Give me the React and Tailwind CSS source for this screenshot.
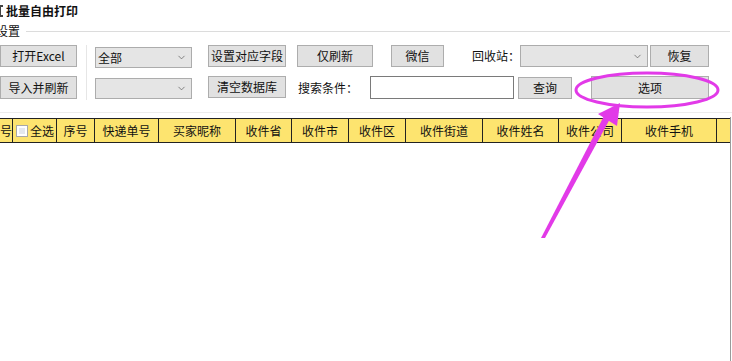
import { ChevronDown } from "lucide-react";

const font = { fontFamily: '"Microsoft YaHei", "Noto Sans CJK SC", "Noto Sans", sans-serif' };

const Btn = ({ className = "", children }) => (
  <button
    className={`h-[22px] bg-[#e1e1e1] border border-[#adadad] text-[12px] text-[#111] leading-none flex items-center justify-center ${className}`}
  >
    {children}
  </button>
);

const Select = ({ className = "", value }) => (
  <div
    className={`h-[21px] bg-[#e5e5e5] border border-[#acacac] flex items-center justify-between pl-[2px] pr-[4px] text-[12px] text-[#111] ${className}`}
  >
    <span>{value}</span>
    <ChevronDown className="w-[11px] h-[11px] text-[#555]" strokeWidth={1.5} />
  </div>
);

const columns = [
  { w: "w-[13px]", label: "号", align: "justify-start" },
  { w: "w-[44px]", label: "全选", check: true },
  { w: "w-[38px]", label: "序号" },
  { w: "w-[64px]", label: "快递单号" },
  { w: "w-[77px]", label: "买家昵称" },
  { w: "w-[56px]", label: "收件省" },
  { w: "w-[57px]", label: "收件市" },
  { w: "w-[57px]", label: "收件区" },
  { w: "w-[77px]", label: "收件街道" },
  { w: "w-[76px]", label: "收件姓名" },
  { w: "w-[63px]", label: "收件公司" },
  { w: "w-[95px]", label: "收件手机" },
  { w: "w-[14px]", label: "" },
];

export default function App() {
  return (
    <div className="relative w-[732px] h-[361px] overflow-hidden bg-white" style={font}>
      {/* title */}
      <div className="h-[22px] flex items-center">
        <div className="w-[4px] h-[12px] border-l-2 border-t-2 border-b-2 border-[#444] ml-[-1px]" />
        <span className="ml-[3px] text-[12px] font-bold text-[#111]">批量自由打印</span>
      </div>

      {/* group label */}
      <div className="h-[18px] flex items-center ml-[-4px]">
        <span className="text-[12px] text-[#111] whitespace-nowrap">设置</span>
        <div className="flex-1 h-px bg-[#dcdcdc] ml-[6px] mr-[2px]" />
      </div>

      {/* toolbar */}
      <div className="flex mt-[5px] h-[56px]">
        <div className="flex flex-col gap-[9px]">
          <Btn className="w-[77px]">打开Excel</Btn>
          <Btn className="w-[77px] h-[23px]">导入并刷新</Btn>
        </div>
        <div className="w-px h-[55px] bg-[#e6e6e6] ml-[9px]" />
        <div className="flex flex-col gap-[10px] ml-[8px] pt-[2px]">
          <Select className="w-[97px]" value="全部" />
          <Select className="w-[97px]" value="" />
        </div>
        <div className="flex flex-col gap-[9px] ml-[16px]">
          <Btn className="w-[78px]">设置对应字段</Btn>
          <Btn className="w-[78px]">清空数据库</Btn>
        </div>
        <div className="flex flex-col gap-[9px]">
          <div className="flex items-center h-[22px]">
            <Btn className="w-[76px] ml-[11px]">仅刷新</Btn>
            <Btn className="w-[53px] ml-[18px]">微信</Btn>
            <span className="ml-[28px] w-[48px] shrink-0 whitespace-nowrap text-[12px] text-[#111]">回收站：</span>
            <Select className="w-[128px] h-[22px]" value="" />
            <Btn className="w-[59px] ml-[2px]">恢复</Btn>
          </div>
          <div className="flex items-center h-[23px]">
            <span className="ml-[12px] w-[72px] shrink-0 whitespace-nowrap text-[12px] text-[#111]">搜索条件：</span>
            <div className="w-[144px] h-[23px] bg-white border border-[#7a7a7a]" />
            <Btn className="w-[54px] ml-[4px]">查询</Btn>
            <Btn className="w-[118px] h-[23px] ml-[19px]">选项</Btn>
          </div>
        </div>
      </div>

      <div className="h-px bg-[#ececec] mt-[11px]" />

      {/* table header */}
      <div className="flex mt-[5px] h-[25px] border-t border-b border-[#222] w-[731px]">
        {columns.map((c, i) => (
          <div
            key={i}
            className={`${c.w} shrink-0 h-full bg-[#fde46f] border-r border-[#222] flex items-center ${c.align || "justify-center"} text-[12px] text-[#111] overflow-hidden whitespace-nowrap`}
          >
            {c.check && (
              <span className="w-[12px] h-[12px] bg-white border border-[#a8a8a8] mr-[2px] ml-[1px] flex items-center justify-center">
                <span className="w-[6px] h-[6px] bg-[#e4e8ee]" />
              </span>
            )}
            {c.label}
          </div>
        ))}
      </div>

      <div className="absolute right-[1px] top-[117px] bottom-0 w-px bg-[#9a9a9a]" />

      {/* annotation */}
      <svg className="absolute inset-0 pointer-events-none" width="732" height="361">
        <ellipse cx="647" cy="90" rx="71" ry="17" fill="none" stroke="#e23ae8" strokeWidth="3" />
        <polygon points="541,238 545,238 611,117 605,114" fill="#e23ae8" />
        <polygon points="620,103 598,114 617,126" fill="#e23ae8" />
      </svg>
    </div>
  );
}
